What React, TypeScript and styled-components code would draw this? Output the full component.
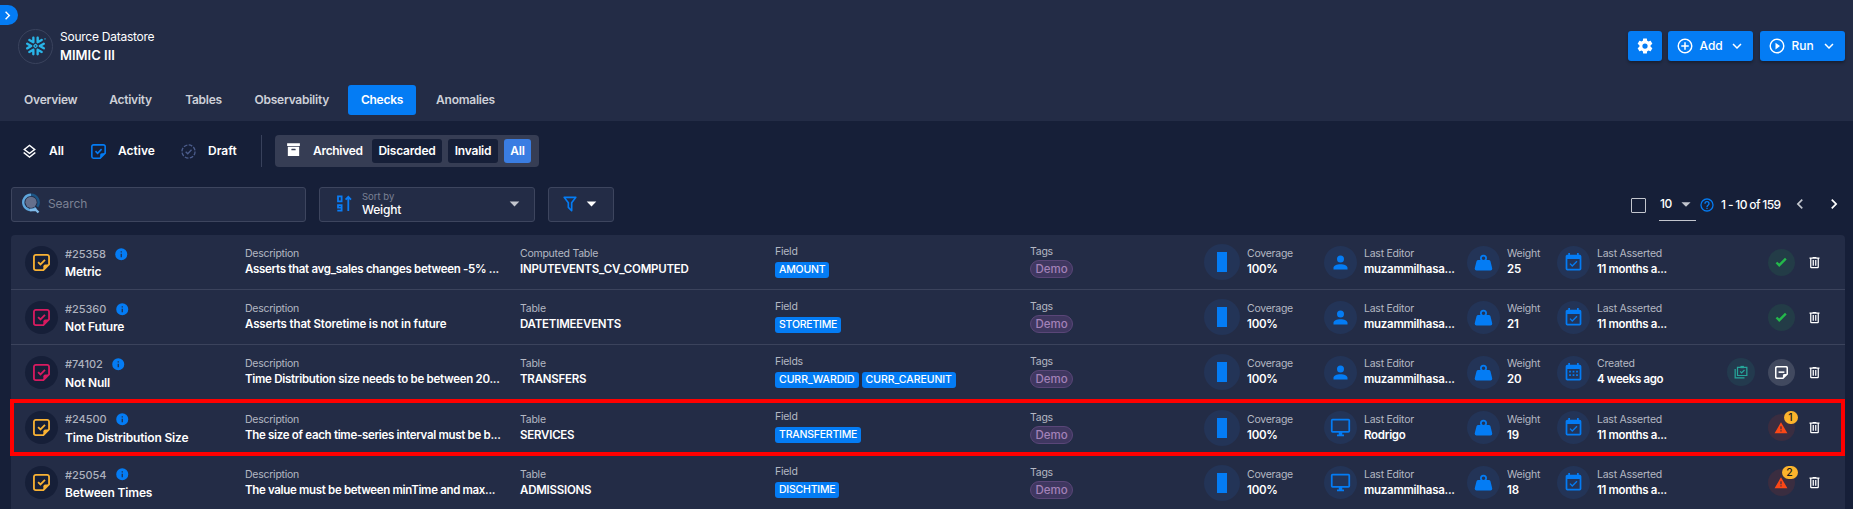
import React from 'react';
import styled, { createGlobalStyle } from 'styled-components';
import { SiSnowflake } from 'react-icons/si';

const Global = createGlobalStyle`
  * { box-sizing: border-box; }
  body { margin: 0; background: #161f38; font-family: Inter, "Liberation Sans", sans-serif; color: #fff; overflow: hidden; }
`;

const paths: Record<string, string> = {
  weight: 'M12,3A4,4 0 0,1 16,7C16,7.73 15.81,8.41 15.46,9H18C18.95,9 19.75,9.67 19.95,10.56C21.96,18.57 22,18.78 22,19A2,2 0 0,1 20,21H4A2,2 0 0,1 2,19C2,18.78 2.04,18.57 4.05,10.56C4.25,9.67 5.05,9 6,9H8.54C8.19,8.41 8,7.73 8,7A4,4 0 0,1 12,3M12,5A2,2 0 0,0 10,7A2,2 0 0,0 12,9A2,2 0 0,0 14,7A2,2 0 0,0 12,5Z',
  account: 'M12,4A4,4 0 0,1 16,8A4,4 0 0,1 12,12A4,4 0 0,1 8,8A4,4 0 0,1 12,4M12,14C16.42,14 20,15.79 20,18V20H4V18C4,15.79 7.58,14 12,14Z',
  monitor: 'M21,16H3V4H21M21,2H3C1.89,2 1,2.89 1,4V16A2,2 0 0,0 3,18H10V20H8V22H16V20H14V18H21A2,2 0 0,0 23,16V4C23,2.89 22.1,2 21,2Z',
  calendarCheck: 'M19,19H5V8H19M19,3H18V1H16V3H8V1H6V3H5C3.89,3 3,3.9 3,5V19A2,2 0 0,0 5,21H19A2,2 0 0,0 21,19V5A2,2 0 0,0 19,3M16.53,11.06L15.47,10L10.59,14.88L8.47,12.76L7.41,13.82L10.59,17L16.53,11.06Z',
  calendarMonth: 'M9,10V12H7V10H9M13,10V12H11V10H13M17,10V12H15V10H17M19,3A2,2 0 0,1 21,5V19A2,2 0 0,1 19,21H5C3.89,21 3,20.1 3,19V5A2,2 0 0,1 5,3H6V1H8V3H16V1H18V3H19M19,19V8H5V19H19M9,14V16H7V14H9M13,14V16H11V14H13M17,14V16H15V14H17Z',
  trash: 'M9,3V4H4V6H5V19A2,2 0 0,0 7,21H17A2,2 0 0,0 19,19V6H20V4H15V3H9M7,6H17V19H7V6M9,8V17H11V8H9M13,8V17H15V8H13Z',
  check: 'M9,20.42L2.79,14.21L5.62,11.38L9,14.77L18.88,4.88L21.71,7.71L9,20.42Z',
  alert: 'M13 14H11V9H13M13 18H11V16H13M1 21H23L12 2L1 21Z',
  cog: 'M12,15.5A3.5,3.5 0 0,1 8.5,12A3.5,3.5 0 0,1 12,8.5A3.5,3.5 0 0,1 15.5,12A3.5,3.5 0 0,1 12,15.5M19.43,12.97C19.47,12.65 19.5,12.33 19.5,12C19.5,11.67 19.47,11.34 19.43,11L21.54,9.37C21.73,9.22 21.78,8.95 21.66,8.73L19.66,5.27C19.54,5.05 19.27,4.96 19.05,5.05L16.56,6.05C16.04,5.66 15.5,5.32 14.87,5.07L14.5,2.42C14.46,2.18 14.25,2 14,2H10C9.75,2 9.54,2.18 9.5,2.42L9.13,5.07C8.5,5.32 7.96,5.66 7.44,6.05L4.95,5.05C4.73,4.96 4.46,5.05 4.34,5.27L2.34,8.73C2.21,8.95 2.27,9.22 2.46,9.37L4.57,11C4.53,11.34 4.5,11.67 4.5,12C4.5,12.33 4.53,12.65 4.57,12.97L2.46,14.63C2.27,14.78 2.21,15.05 2.34,15.27L4.34,18.73C4.46,18.95 4.73,19.03 4.95,18.95L7.44,17.94C7.96,18.34 8.5,18.68 9.13,18.93L9.5,21.58C9.54,21.82 9.75,22 10,22H14C14.25,22 14.46,21.82 14.5,21.58L14.87,18.93C15.5,18.67 16.04,18.34 16.56,17.94L19.05,18.95C19.27,19.03 19.54,18.95 19.66,18.73L21.66,15.27C21.78,15.05 21.73,14.78 21.54,14.63L19.43,12.97Z',
  plusCircle: 'M12,20C7.59,20 4,16.41 4,12C4,7.59 7.59,4 12,4C16.41,4 20,7.59 20,12C20,16.41 16.41,20 12,20M12,2A10,10 0 0,0 2,12A10,10 0 0,0 12,22A10,10 0 0,0 22,12A10,10 0 0,0 12,2M13,7H11V11H7V13H11V17H13V13H17V11H13V7Z',
  playCircle: 'M12,20C7.59,20 4,16.41 4,12C4,7.59 7.59,4 12,4C16.41,4 20,7.59 20,12C20,16.41 16.41,20 12,20M12,2A10,10 0 0,0 2,12A10,10 0 0,0 12,22A10,10 0 0,0 22,12A10,10 0 0,0 12,2M10,16.5L16,12L10,7.5V16.5Z',
  down: 'M7.41,8.58L12,13.17L16.59,8.58L18,10L12,16L6,10L7.41,8.58Z',
  right: 'M8.59,16.58L13.17,12L8.59,7.41L10,6L16,12L10,18L8.59,16.58Z',
  left: 'M15.41,16.58L10.83,12L15.41,7.41L14,6L8,12L14,18L15.41,16.58Z',
  caret: 'M7,10L12,15L17,10H7Z',
  help: 'M11,18H13V16H11V18M12,2A10,10 0 0,0 2,12A10,10 0 0,0 12,22A10,10 0 0,0 22,12A10,10 0 0,0 12,2M12,20C7.59,20 4,16.41 4,12C4,7.59 7.59,4 12,4C16.41,4 20,7.59 20,12C20,16.41 16.41,20 12,20M12,6A4,4 0 0,0 8,10H10A2,2 0 0,1 12,8A2,2 0 0,1 14,10C14,12 11,11.75 11,15H13C13,12.75 16,12.5 16,10A4,4 0 0,0 12,6Z',
  info: 'M13,9H11V7H13M13,17H11V11H13M12,2A10,10 0 0,0 2,12A10,10 0 0,0 12,22A10,10 0 0,0 22,12A10,10 0 0,0 12,2Z',
  layers: 'M12,18.54L19.37,12.8L21,14.07L12,21.07L3,14.07L4.62,12.81L12,18.54M12,16L3,9L12,2L21,9L12,16M12,4.53L6.26,9L12,13.47L17.74,9L12,4.53Z',
  archive: 'M3,3H21V7H3V3M4,8H20V21H4V8M9.5,11A0.5,0.5 0 0,0 9,11.5V13H15V11.5A0.5,0.5 0 0,0 14.5,11H9.5Z',
  filter: 'M15,19.88C15.04,20.18 14.94,20.5 14.71,20.71C14.32,21.1 13.69,21.1 13.3,20.71L9.29,16.7C9.06,16.47 8.96,16.16 9,15.87V10.75L4.21,4.62C3.87,4.19 3.95,3.56 4.38,3.22C4.57,3.08 4.78,3 5,3H19C19.22,3 19.43,3.08 19.62,3.22C20.05,3.56 20.13,4.19 19.79,4.62L15,10.75V19.88M7.04,5L11,10.06V15.58L13,17.58V10.05L16.96,5H7.04Z',
};

const Glyph = ({ name, size, color = 'currentColor' }: { name: string; size: number; color?: string }) => (
  <svg width={size} height={size} viewBox="0 0 24 24" fill={color} fillRule="evenodd"><path d={paths[name]} /></svg>
);

const Note = ({ size, minus }: { size: number; minus?: boolean }) => (
  <svg width={size} height={size} viewBox="0 0 18 18" fill="none" stroke="currentColor" strokeWidth={minus ? 2.2 : 1.9}>
    <path d="M17 11V3a2 2 0 0 0-2-2H3a2 2 0 0 0-2 2v12a2 2 0 0 0 2 2h8z" strokeLinejoin="round" />
    <path d="M11 17v-4a2 2 0 0 1 2-2h4z" fill="currentColor" stroke="none" />
    {minus ? <path d="M5 8.5h8" /> : <path d="M5.4 8.6l2.5 2.5 4.8-4.9" />}
  </svg>
);

const DraftMark = () => (
  <svg width="15" height="15" viewBox="0 0 16 16" fill="none" stroke="#4c5d8c" strokeWidth="1.4">
    <circle cx="8" cy="8" r="7" strokeDasharray="4 1.5" />
    <path d="M5 8.2l2.2 2.2 4-4.2" />
  </svg>
);

const SearchMark = () => (
  <svg width="19" height="21" viewBox="0 0 19 21" fill="none">
    <circle cx="9" cy="9.3" r="5.6" fill="#66708c" />
    <path d="M9 1.8A7.6 7.6 0 1 0 14 15" stroke="#5fa6dc" strokeWidth="2.4" />
    <path d="M9 1.8a7.6 7.6 0 0 1 6.2 12" stroke="#1d5585" strokeWidth="2.4" />
    <path d="M8 17h6.5M12.5 15.5l4 4" stroke="#7fb9e8" strokeWidth="2.4" />
  </svg>
);

const SortMark = () => (
  <svg width="15" height="17" viewBox="0 0 15 17" fill="none" stroke="#0a7cf5" strokeWidth="1.8">
    <path d="M1 1.3h3.6v5H1zM4.6 13V10.2H1v2.500h3.600M4.600 12v3.600H.3M11.300 16V2M8.600 4.600l2.700-2.800L14 4.600" />
  </svg>
);

const ClipMark = () => (
  <svg width="14" height="14" viewBox="0 0 24 24" fill="none" stroke="currentColor" strokeWidth="2.1">
    <path d="M6 4h16v14H6zM2 7v15h16M10.5 11l2.5 2.6 5-5" /><path d="M11 1.5h6v4h-6z" fill="currentColor" stroke="none" />
  </svg>
);

const Header = styled.header`
  height: 121px; background: #232c46; display: flex; flex-direction: column; padding-top: 5px;
`;
const Expander = styled.div`
  width: 18px; height: 20px; border-radius: 0 10px 10px 0; background: #047cf4;
  display: flex; align-items: center; justify-content: center; padding-right: 3px;
  svg { flex: none; }
`;
const TitleBar = styled.div`
  display: flex; height: 37px; padding: 0 8px 0 18px; margin-top: 2px; align-items: center;
`;
const Logo = styled.div`
  width: 35px; height: 35px; border: 1px solid #3a435d; border-radius: 50%; color: #29b5e8;
  display: flex; align-items: center; justify-content: center; margin: 1px 7px 0 0; flex: none;
`;
const TitleText = styled.div`flex: 1; display: flex; flex-direction: column;`;
const Line = styled.span<{ $s?: number; $w?: number; $ls?: number; $h?: number; $c?: string }>`
  white-space: nowrap; font-size: ${p => p.$s ?? 12}px; font-weight: ${p => p.$w ?? 600};
  letter-spacing: ${p => p.$ls ?? 0}px; line-height: ${p => p.$h ?? 16}px; color: ${p => p.$c ?? '#fff'};
`;
const Button = styled.div<{ $w: number; $ml?: number }>`
  width: ${p => p.$w}px; height: 30px; margin-left: ${p => p.$ml ?? 0}px; border-radius: 3px; background: #047cf4;
  display: flex; align-items: center; justify-content: center; box-shadow: 0 2px 3px rgba(0,0,0,.3);
  svg { flex: none; }
  span { width: 22px; margin: 0 6px 0 6px; }
`;
const Tabs = styled.nav`display: flex; gap: 6px; padding-left: 12px; margin-top: 21px;`;
const Tab = styled.div<{ $w: number; $on?: boolean }>`
  width: ${p => p.$w}px; height: 30px; border-radius: 3px; line-height: 30px; text-align: center; white-space: nowrap;
  font-size: 12px; font-weight: 600; letter-spacing: -.25px;
  color: ${p => (p.$on ? '#fff' : '#cdd0d8')}; background: ${p => (p.$on ? '#047cf4' : 'transparent')};
`;
const Filters = styled.div`display: flex; align-items: center; height: 32px; margin-top: 14px; padding-left: 21px;`;
const Filter = styled.div<{ $w: number; $gap?: number; $c?: string }>`
  width: ${p => p.$w}px; display: flex; align-items: center; gap: ${p => p.$gap ?? 12}px; color: ${p => p.$c ?? '#fff'};
  svg { flex: none; }
`;
const Divider = styled.div`width: 1px; height: 32px; background: #38415b; margin-right: 13px;`;
const Group = styled.div`
  width: 264px; height: 32px; border-radius: 4px; background: #363d54; display: flex; align-items: center;
  padding: 0 8px 0 10px; gap: 6px;
`;
const GroupLabel = styled.div`
  display: flex; align-items: center; gap: 11px; width: 81px;
  svg { flex: none; margin-top: -3px; }
`;
const Chip = styled.div<{ $w: number; $on?: boolean }>`
  width: ${p => p.$w}px; height: 24px; line-height: 24px; border-radius: 3px; text-align: center; font-size: 12px; font-weight: 600;
  letter-spacing: -.2px; background: ${p => (p.$on ? '#3a7de2' : '#161f38')};
`;
const Tools = styled.div`display: flex; margin-top: 20px; padding: 0 8px 0 11px; height: 35px; align-items: center;`;
const Box = styled.div<{ $w: number; $mr: number; $pl: number }>`
  width: ${p => p.$w}px; height: 35px; margin-right: ${p => p.$mr}px; padding: 0 0 2px ${p => p.$pl}px;
  border: 1px solid #3d455e; border-radius: 3px; background: #232c46; display: flex; align-items: center;
  svg { flex: none; }
`;
const Placeholder = styled.span`margin-left: 7px; font-size: 12px; letter-spacing: -.1px; color: #7b8194;`;
const SortText = styled.div`display: flex; flex-direction: column; width: 141px; margin-left: 10px;`;
const Pager = styled.div`
  margin-left: auto; display: flex; align-items: center; height: 35px; width: 214px; flex: none;
  svg { flex: none; }
`;
const Checkbox = styled.div`width: 15px; height: 15px; border: 1px solid #c3c6ce; border-radius: 1px; margin: 2px 13px 0 0; flex: none;`;
const PageSize = styled.div`
  width: 37px; height: 33px; border-bottom: 1px solid #c3c6ce; display: flex; align-items: center; justify-content: space-between;
  padding-left: 1px; margin-right: 3px; flex: none;
  svg { margin-right: -1px; }
`;
const Range = styled.div`display: flex; width: 62px; margin: 0 7px 0 6px; flex: none;`;
const PageArrows = styled.div`display: flex; gap: 14px; margin-top: -2px;`;
const List = styled.div`margin: 13px 8px 0 11px; background: #232c46; border-radius: 4px 4px 0 0;`;
const Row = styled.div`
  position: relative; height: 55.2px; border-bottom: 1px solid #3b435c; display: flex; align-items: center; padding-left: 14px;
`;
const Outline = styled.div`position: absolute; inset: -2px 0 -1px -1px; border: 4px solid #f00;`;
const Disc = styled.div<{ $d?: number; $bg?: string; $c?: string }>`
  position: relative; width: ${p => p.$d ?? 33}px; height: ${p => p.$d ?? 33}px; border-radius: 50%; flex: none;
  background: ${p => p.$bg ?? '#233457'}; color: ${p => p.$c ?? '#047cf4'};
  display: flex; align-items: center; justify-content: center;
`;
const Cell = styled.div<{ $w: number; $ml?: number; $mt?: number }>`
  width: ${p => p.$w}px; margin-left: ${p => p.$ml ?? 0}px; margin-top: ${p => p.$mt ?? -1.3}px; flex: none;
  display: flex; flex-direction: column; align-items: flex-start;
`;
const IdLine = styled.div`display: flex; align-items: center; gap: 8.5px; color: #047cf4; height: 17px;`;
const Fields = styled.div`display: flex; gap: 3px; margin-top: 3px;`;
const FieldChip = styled.span<{ $ls: number }>`
  height: 16px; line-height: 16px; padding: 0 4px; border-radius: 3px; background: #047cf4; font-size: 10.5px; font-weight: 500;
  letter-spacing: ${p => p.$ls}px;
`;
const Tag = styled.span`
  height: 18px; line-height: 16px; width: 43px; text-align: center; border-radius: 9px; border: 1px solid #5a4678; background: #3f3760;
  color: #a382b8; font-size: 11.5px; font-weight: 500; margin-top: 1px;
`;
const Bar = styled.div`width: 10px; height: 20px; background: #047cf4;`;
const Actions = styled.div`
  margin-left: auto; width: 119px; display: flex; align-items: center; justify-content: flex-end; gap: 12.5px; padding-right: 23px;
  svg { flex: none; }
`;
const Badge = styled.span<{ $w: number }>`
  position: absolute; right: -3px; top: -3px; height: 13px; width: ${p => p.$w}px; border-radius: 7px; background: #fcb42c;
  color: #1b1b1b; font-size: 10.5px; line-height: 13px; font-weight: 500; text-align: center;
`;

const Label = ({ children }: { children: React.ReactNode }) => <Line $s={10.5} $w={400} $ls={-0.25} $h={15} $c="#b4b8c3">{children}</Line>;
const Value = ({ children, ls }: { children: React.ReactNode; ls?: number }) => <Line $s={11.5} $w={600} $ls={ls ?? -0.23} $h={16}>{children}</Line>;

type Check = {
  id: string; name: string; color: string; desc: string; spacing: number; kind: string; table: string; fields: string[];
  editor: string; device?: boolean; weight: number; when: [string, string]; status: 'ok' | 'draft' | 'alert'; count?: number; marked?: boolean;
};
const yellow = '#f9b234';
const pink = '#d81b60';
const asserted: [string, string] = ['Last Asserted', '11 months a...'];
const checks: Check[] = [
  { id: '#25358', name: 'Metric', color: yellow, desc: 'Asserts that avg_sales changes between -5% ...', spacing: -0.3, kind: 'Computed Table', table: 'INPUTEVENTS_CV_COMPUTED', fields: ['AMOUNT'], editor: 'muzammilhasa...', weight: 25, when: asserted, status: 'ok' },
  { id: '#25360', name: 'Not Future', color: pink, desc: 'Asserts that Storetime is not in future', spacing: -0.14, kind: 'Table', table: 'DATETIMEEVENTS', fields: ['STORETIME'], editor: 'muzammilhasa...', weight: 21, when: asserted, status: 'ok' },
  { id: '#74102', name: 'Not Null', color: pink, desc: 'Time Distribution size needs to be between 20...', spacing: -0.28, kind: 'Table', table: 'TRANSFERS', fields: ['CURR_WARDID', 'CURR_CAREUNIT'], editor: 'muzammilhasa...', weight: 20, when: ['Created', '4 weeks ago'], status: 'draft' },
  { id: '#24500', name: 'Time Distribution Size', color: yellow, desc: 'The size of each time-series interval must be b...', spacing: -0.31, kind: 'Table', table: 'SERVICES', fields: ['TRANSFERTIME'], editor: 'Rodrigo', device: true, weight: 19, when: asserted, status: 'alert', count: 1, marked: true },
  { id: '#25054', name: 'Between Times', color: yellow, desc: 'The value must be between minTime and max...', spacing: -0.33, kind: 'Table', table: 'ADMISSIONS', fields: ['DISCHTIME'], editor: 'muzammilhasa...', device: true, weight: 18, when: asserted, status: 'alert', count: 2 },
];

const CheckRow = ({ c }: { c: Check }) => (
  <Row>
    <Disc $bg="#161f38" $c={c.color}><Note size={17} /></Disc>
    <Cell $w={180} $ml={7} $mt={3.4}>
      <IdLine><Line $s={11} $w={500} $ls={-0.05} $c="#aeb2be">{c.id}</Line><Glyph name="info" size={14.5} /></IdLine>
      <Line $s={12} $ls={-0.17} $h={20}>{c.name}</Line>
    </Cell>
    <Cell $w={275}><Label>Description</Label><Value ls={c.spacing}>{c.desc}</Value></Cell>
    <Cell $w={255}><Label>{c.kind}</Label><Value>{c.table}</Value></Cell>
    <Cell $w={255} $mt={-3}>
      <Label>{c.fields.length > 1 ? 'Fields' : 'Field'}</Label>
      <Fields>{c.fields.map(f => <FieldChip key={f} $ls={c.fields.length > 1 ? -0.05 : -0.22}>{f}</FieldChip>)}</Fields>
    </Cell>
    <Cell $w={174} $mt={-2}><Label>Tags</Label><Tag>Demo</Tag></Cell>
    <Disc $d={36}><Bar /></Disc>
    <Cell $w={77} $ml={7}><Label>Coverage</Label><Value>100%</Value></Cell>
    <Disc><Glyph name={c.device ? 'monitor' : 'account'} size={21} /></Disc>
    <Cell $w={103} $ml={7}><Label>Last Editor</Label><Value ls={-0.27}>{c.editor}</Value></Cell>
    <Disc><Glyph name="weight" size={21} /></Disc>
    <Cell $w={50} $ml={7}><Label>Weight</Label><Value>{c.weight}</Value></Cell>
    <Disc><Glyph name={c.status === 'draft' ? 'calendarMonth' : 'calendarCheck'} size={21} /></Disc>
    <Cell $w={100} $ml={7}><Label>{c.when[0]}</Label><Value ls={-0.37}>{c.when[1]}</Value></Cell>
    <Actions>
      {c.status === 'draft' && <Disc $d={28} $bg="#233a4e" $c="#26a69a"><ClipMark /></Disc>}
      {c.status === 'ok' && <Disc $d={27} $bg="#233c47" $c="#24b84b"><Glyph name="check" size={14} /></Disc>}
      {c.status === 'draft' && <Disc $d={27} $bg="#41495f" $c="#fff"><Note size={13} minus /></Disc>}
      {c.status === 'alert' && <Disc $d={27} $bg="#3a2d40" $c="#fb4716"><Glyph name="alert" size={14} /><Badge $w={c.count === 1 ? 14 : 16}>{c.count}</Badge></Disc>}
      <Glyph name="trash" size={15} />
    </Actions>
    {c.marked && <Outline />}
  </Row>
);

export default function App() {
  return (
    <>
      <Global />
      <Header>
        <Expander><Glyph name="right" size={17} /></Expander>
        <TitleBar>
          <Logo><SiSnowflake size={20} /></Logo>
          <TitleText>
            <Line $s={12} $w={400} $ls={-0.25} $h={19}>Source Datastore</Line>
            <Line $s={13} $w={600} $h={19}>MIMIC III</Line>
          </TitleText>
          <Button $w={34}><Glyph name="cog" size={18} /></Button>
          <Button $w={85} $ml={6}><Glyph name="plusCircle" size={18} /><Line $s={12} $w={500}>Add</Line><Glyph name="down" size={18} /></Button>
          <Button $w={85} $ml={7}><Glyph name="playCircle" size={18} /><Line $s={12} $w={500}>Run</Line><Glyph name="down" size={18} /></Button>
        </TitleBar>
        <Tabs>
          <Tab $w={77.5}>Overview</Tab><Tab $w={70}>Activity</Tab><Tab $w={64}>Tables</Tab>
          <Tab $w={100.5}>Observability</Tab><Tab $w={68} $on>Checks</Tab><Tab $w={87}>Anomalies</Tab>
        </Tabs>
      </Header>
      <Filters>
        <Filter $w={70} $gap={11}><Glyph name="layers" size={17} /><Line>All</Line></Filter>
        <Filter $w={90} $c="#047cf4"><Note size={15} /><Line>Active</Line></Filter>
        <Filter $w={80}><DraftMark /><Line>Draft</Line></Filter>
        <Divider />
        <Group>
          <GroupLabel><Glyph name="archive" size={17} /><Line $ls={-0.3}>Archived</Line></GroupLabel>
          <Chip $w={70}>Discarded</Chip><Chip $w={50}>Invalid</Chip><Chip $w={27} $on>All</Chip>
        </Group>
      </Filters>
      <Tools>
        <Box $w={295} $mr={13} $pl={10}><SearchMark /><Placeholder>Search</Placeholder></Box>
        <Box $w={216} $mr={13} $pl={17}>
          <SortMark />
          <SortText><Line $s={9.5} $w={400} $h={12} $c="#7b8194">Sort by</Line><Line $s={12} $w={500} $ls={-0.2} $h={14}>Weight</Line></SortText>
          <Glyph name="caret" size={23} color="#c3c6ce" />
        </Box>
        <Box $w={66} $mr={0} $pl={11}><Glyph name="filter" size={20} color="#047cf4" /><Glyph name="caret" size={23} /></Box>
        <Pager>
          <Checkbox />
          <PageSize><Line $s={12} $w={500} $ls={-0.5}>10</Line><Glyph name="caret" size={22} color="#c3c6ce" /></PageSize>
          <Glyph name="help" size={16} color="#047cf4" />
          <Range><Line $s={12} $w={500} $ls={-0.65}>1 - 10 of 159</Line></Range>
          <PageArrows><Glyph name="left" size={20} color="#c3c6ce" /><Glyph name="right" size={20} /></PageArrows>
        </Pager>
      </Tools>
      <List>{checks.map(c => <CheckRow key={c.id} c={c} />)}</List>
    </>
  );
}
